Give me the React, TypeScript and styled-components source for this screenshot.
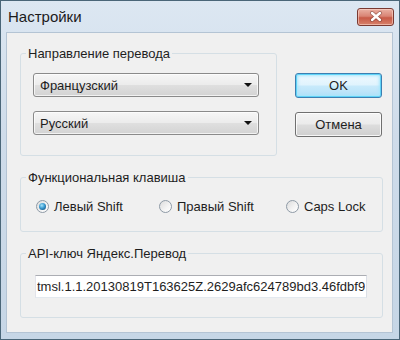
import React from "react";
import styled, { createGlobalStyle } from "styled-components";

const GlobalStyle = createGlobalStyle`
  html, body { margin: 0; padding: 0; }
  body {
    width: 400px;
    height: 340px;
    overflow: hidden;
    background: #ffffff;
    font-family: "Liberation Sans", Arial, sans-serif;
  }
  *, *::before, *::after { box-sizing: border-box; }
`;

const Window = styled.div`
  width: 400px;
  height: 340px;
  display: flex;
  flex-direction: column;
  border: 1px solid #4a6678;
  background: linear-gradient(180deg, #dce7f2 0%, #cfdcea 40%, #c6d6e6 100%);
`;

const TitleBar = styled.div`
  height: 31px;
  flex: none;
  display: flex;
  align-items: center;
  justify-content: space-between;
  padding: 0 5px 0 7px;
`;

const Title = styled.div`
  font-size: 15px;
  line-height: 18px;
  color: #1b1b1b;
`;

const CloseButton = styled.div`
  width: 37px;
  height: 18px;
  display: flex;
  align-items: center;
  justify-content: center;
  border: 1px solid #7a3a32;
  border-radius: 3px;
  background: linear-gradient(180deg, #eab1a4 0%, #d98474 45%, #c85a47 55%, #d7816a 100%);
  box-shadow: inset 0 0 0 1px rgba(255, 220, 210, 0.55);
`;

const Client = styled.div`
  flex: 1;
  margin: 0 6px 6px 5px;
  border: 1px solid #b4c4d4;
  background: #f0f0f0;
  padding: 13px 0 0 13px;
  display: flex;
  flex-direction: column;
  gap: 14px;
`;

const TopRow = styled.div`
  display: flex;
  align-items: flex-start;
`;

const GroupBox = styled.fieldset<{ $width: number }>`
  width: ${(p) => p.$width}px;
  margin: 0;
  padding: 0;
  min-width: 0;
  border: 1px solid #d5dfe5;
  border-radius: 3px;
  flex: none;
`;

const Legend = styled.legend`
  margin-left: 5px;
  padding: 0 2px;
  font-size: 13px;
  line-height: 15px;
  color: #1e1e1e;
`;

const GroupBody = styled.div<{ $pad: string }>`
  padding: ${(p) => p.$pad};
`;

const ComboStack = styled.div`
  display: flex;
  flex-direction: column;
  gap: 14px;
`;

const Combo = styled.div`
  width: 226px;
  height: 24px;
  display: flex;
  align-items: center;
  justify-content: space-between;
  padding: 0 6px 0 6px;
  border: 1px solid #8a8a8a;
  border-radius: 3px;
  background: linear-gradient(180deg, #f6f6f6 0%, #ececec 48%, #dfdfdf 52%, #d3d3d3 100%);
  box-shadow: inset 0 0 0 1px rgba(255, 255, 255, 0.7);
  font-size: 13px;
  color: #1e1e1e;
`;

const Arrow = styled.span`
  width: 0;
  height: 0;
  border-left: 4px solid transparent;
  border-right: 4px solid transparent;
  border-top: 4px solid #111;
`;

const ButtonColumn = styled.div`
  margin-left: 18px;
  margin-top: 27px;
  display: flex;
  flex-direction: column;
  gap: 14px;
`;

const DialogButton = styled.div<{ $primary?: boolean }>`
  width: 87px;
  height: 25px;
  display: flex;
  align-items: center;
  justify-content: center;
  font-size: 13px;
  color: #1e1e1e;
  border-radius: 3px;
  border: 1px solid ${(p) => (p.$primary ? "#3c7fb1" : "#707070")};
  background: ${(p) =>
    p.$primary
      ? "linear-gradient(180deg, #f0f9fe 0%, #e0f3fd 48%, #c8eafb 52%, #b3e0f8 100%)"
      : "linear-gradient(180deg, #f4f4f4 0%, #ebebeb 48%, #dddddd 52%, #cfcfcf 100%)"};
  box-shadow: ${(p) =>
    p.$primary
      ? "inset 0 0 0 1px #5fd3f7, inset 0 0 3px 2px #a8e6fb"
      : "inset 0 0 0 1px rgba(255,255,255,0.8)"};
`;

const RadioRow = styled.div`
  display: grid;
  grid-template-columns: 123px 127px auto;
  align-items: center;
`;

const RadioOption = styled.label`
  display: flex;
  align-items: center;
  gap: 5px;
  font-size: 13px;
  line-height: 15px;
  color: #1e1e1e;
`;

const RadioCircle = styled.span<{ $checked?: boolean }>`
  width: 13px;
  height: 13px;
  flex: none;
  border-radius: 50%;
  border: 1px solid #8e9aa6;
  background: linear-gradient(135deg, #dcdcdc 0%, #f4f4f4 60%, #ffffff 100%);
  display: flex;
  align-items: center;
  justify-content: center;
  &::after {
    content: "";
    display: ${(p) => (p.$checked ? "block" : "none")};
    width: 7px;
    height: 7px;
    border-radius: 50%;
    background: radial-gradient(circle at 40% 35%, #a6e4fa 0%, #3a9ad0 45%, #1a5c8c 80%, #14486e 100%);
  }
`;

const KeyInput = styled.input`
  width: 332px;
  height: 23px;
  padding: 0 1px;
  margin: 0;
  font-family: "Liberation Sans", Arial, sans-serif;
  font-size: 13px;
  color: #1e1e1e;
  background: #ffffff;
  border: 1px solid;
  border-color: #abadb3 #dbdfe6 #e3e9ef #e2e3ea;
  outline: none;
`;

export default function App() {
  return (
    <>
      <GlobalStyle />
      <Window>
        <TitleBar>
          <Title>Настройки</Title>
          <CloseButton>
            <svg width="14" height="11" viewBox="0 0 14 11">
              <path d="M3 2 L11 9 M11 2 L3 9" stroke="#5a2a24" strokeWidth="4" strokeLinecap="round" opacity="0.45" />
              <path d="M3 2 L11 9 M11 2 L3 9" stroke="#ffffff" strokeWidth="2.4" strokeLinecap="round" />
            </svg>
          </CloseButton>
        </TitleBar>
        <Client>
          <TopRow>
            <GroupBox $width={257}>
              <Legend>Направление перевода</Legend>
              <GroupBody $pad="12px 17px 20px 12px">
                <ComboStack>
                  <Combo>
                    <span>Французский</span>
                    <Arrow />
                  </Combo>
                  <Combo>
                    <span>Русский</span>
                    <Arrow />
                  </Combo>
                </ComboStack>
              </GroupBody>
            </GroupBox>
            <ButtonColumn>
              <DialogButton $primary>OK</DialogButton>
              <DialogButton>Отмена</DialogButton>
            </ButtonColumn>
          </TopRow>
          <GroupBox $width={363}>
            <Legend>Функциональная клавиша</Legend>
            <GroupBody $pad="14px 10px 17px 15px">
              <RadioRow>
                <RadioOption>
                  <RadioCircle $checked />
                  Левый Shift
                </RadioOption>
                <RadioOption>
                  <RadioCircle />
                  Правый Shift
                </RadioOption>
                <RadioOption>
                  <RadioCircle />
                  Caps Lock
                </RadioOption>
              </RadioRow>
            </GroupBody>
          </GroupBox>
          <GroupBox $width={363}>
            <Legend>API-ключ Яндекс.Перевод</Legend>
            <GroupBody $pad="14px 10px 19px 14px">
              <KeyInput readOnly value="tmsl.1.1.20130819T163625Z.2629afc624789bd3.46fdbf9" />
            </GroupBody>
          </GroupBox>
        </Client>
      </Window>
    </>
  );
}
